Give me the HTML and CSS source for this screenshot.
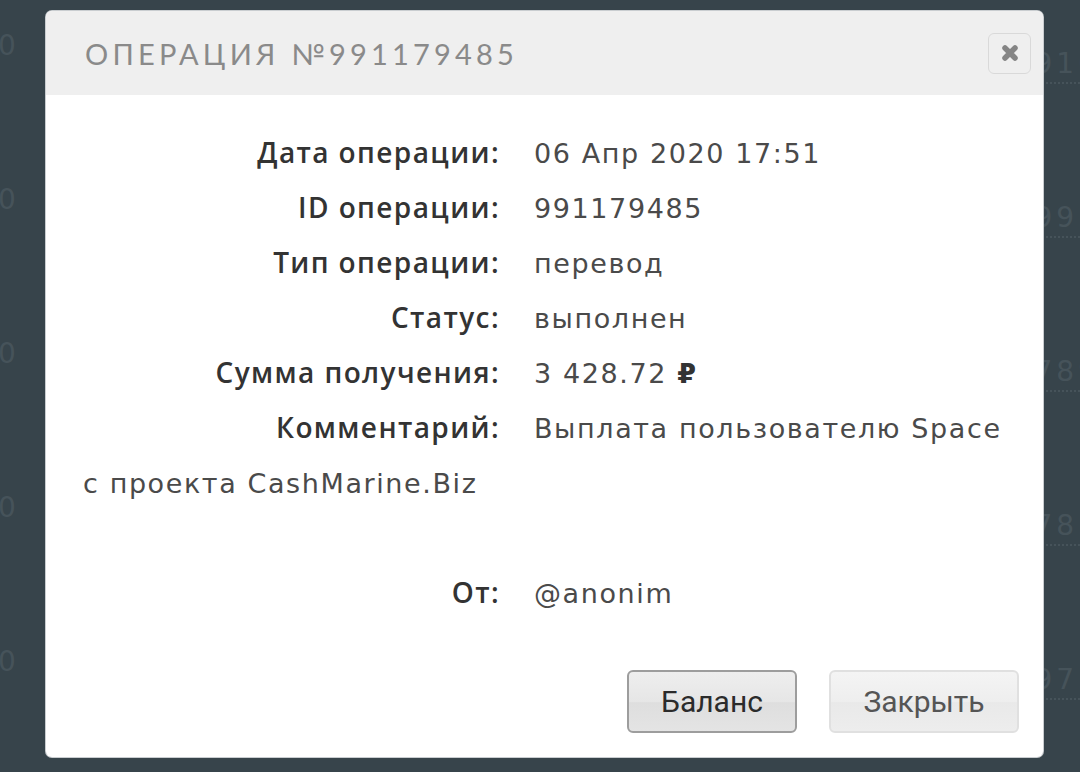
FILE: index.html
```html
<!DOCTYPE html>
<html lang="ru">
<head>
<meta charset="utf-8">
<title>Операция №991179485</title>
<link rel="stylesheet" href="styles.css">
</head>
<body>
<div class="page">
  <div class="bg-row"><span class="bg-left">0</span><span class="bg-right">910</span></div>
  <div class="bg-row"><span class="bg-left">0</span><span class="bg-right">993</span></div>
  <div class="bg-row"><span class="bg-left">0</span><span class="bg-right">789</span></div>
  <div class="bg-row"><span class="bg-left">0</span><span class="bg-right">783</span></div>
  <div class="bg-row"><span class="bg-left">0</span><span class="bg-right">973</span></div>
</div>

<div class="modal">
  <div class="modal-header">
    <h1 class="modal-title">Операция №991179485</h1>
    <button class="close-btn" aria-label="Закрыть">
      <svg width="20" height="20" viewBox="0 0 20 20"><path d="M5 5 L15 15 M15 5 L5 15" stroke="#858585" stroke-width="5.5" stroke-linecap="round"/></svg>
    </button>
  </div>
  <div class="modal-body">
    <div class="row"><span class="label">Дата операции:</span>06 Апр 2020 17:51</div>
    <div class="row"><span class="label">ID операции:</span>991179485</div>
    <div class="row"><span class="label">Тип операции:</span>перевод</div>
    <div class="row"><span class="label">Статус:</span>выполнен</div>
    <div class="row"><span class="label">Сумма получения:</span>3 428.72 <b class="rub">₽</b></div>
    <div class="row"><span class="label">Комментарий:</span>Выплата пользователю Space с проекта CashMarine.Biz</div>
    <div class="row empty"></div>
    <div class="row"><span class="label">От:</span>@anonim</div>
  </div>
  <div class="modal-footer">
    <button class="btn btn-primary">Баланс</button>
    <button class="btn btn-light">Закрыть</button>
  </div>
</div>
</body>
</html>
```

FILE: styles.css
```css
html, body {
  margin: 0;
  padding: 0;
}
body {
  width: 1080px;
  height: 772px;
  overflow: hidden;
  background: #37444b;
  font-family: "DejaVu Sans", "Open Sans", sans-serif;
  position: relative;
}
.page {
  padding-top: 26px;
}
.bg-row {
  height: 154px;
  display: flex;
  justify-content: space-between;
  font-size: 28px;
  color: #46535a;
}
.bg-left {
  margin-left: -2px;
  line-height: 40px;
}
.bg-right {
  margin-top: 20px;
  margin-right: -20px;
  line-height: 36px;
  height: 36px;
  letter-spacing: 4px;
  border-bottom: 2px dotted #46535a;
}

.modal {
  position: absolute;
  left: 46px;
  top: 11px;
  width: 997px;
  height: 746px;
  background: #fff;
  border-radius: 6px;
  box-shadow: 0 0 0 1px #c9cdd0;
  overflow: hidden;
  display: flex;
  flex-direction: column;
}
.modal-header {
  height: 84px;
  background: #efefef;
  display: flex;
  align-items: center;
  justify-content: space-between;
  padding: 0 12px 0 39px;
  flex-shrink: 0;
}
.modal-title {
  margin: 0;
  font-family: "Lato", "Open Sans", sans-serif;
  font-weight: 400;
  font-size: 29px;
  letter-spacing: 4.2px;
  text-transform: uppercase;
  color: #8a8a8a;
}
.close-btn {
  width: 43px;
  height: 41px;
  border: 1px solid #d9d9d9;
  border-radius: 6px;
  background: #efefef;
  padding: 0;
  display: flex;
  align-items: center;
  justify-content: center;
}
.modal-body {
  flex: 1;
  padding: 31px 30px 0 37px;
  font-size: 27px;
  letter-spacing: 1.6px;
  line-height: 55px;
  color: #4a4a4a;
}
.row {
  min-height: 55px;
}
.label {
  display: inline-block;
  width: 417px;
  margin-right: 34px;
  text-align: right;
  font-family: "Open Sans", sans-serif;
  font-size: 28px;
  line-height: 40px;
  font-weight: 600;
  letter-spacing: 1.4px;
  color: #333;
}
.rub {
  font-weight: 700;
  color: #333;
}
.modal-footer {
  display: flex;
  justify-content: flex-end;
  gap: 32px;
  padding: 0 24px 24px 0;
}
.btn {
  height: 63px;
  border-radius: 6px;
  font-family: "Roboto", sans-serif;
  font-size: 30px;
  padding: 0;
}
.btn-primary {
  width: 170px;
  border: 2px solid #9d9d9d;
  color: #2b2b2b;
  background: linear-gradient(#eeeeee, #e6e6e6 50%, #dedede 52%, #e4e4e4);
}
.btn-light {
  width: 190px;
  border: 2px solid #e0e0e0;
  color: #555;
  background: linear-gradient(#f4f4f4, #eeeeee 50%, #e9e9e9 52%, #ededed);
}
```
